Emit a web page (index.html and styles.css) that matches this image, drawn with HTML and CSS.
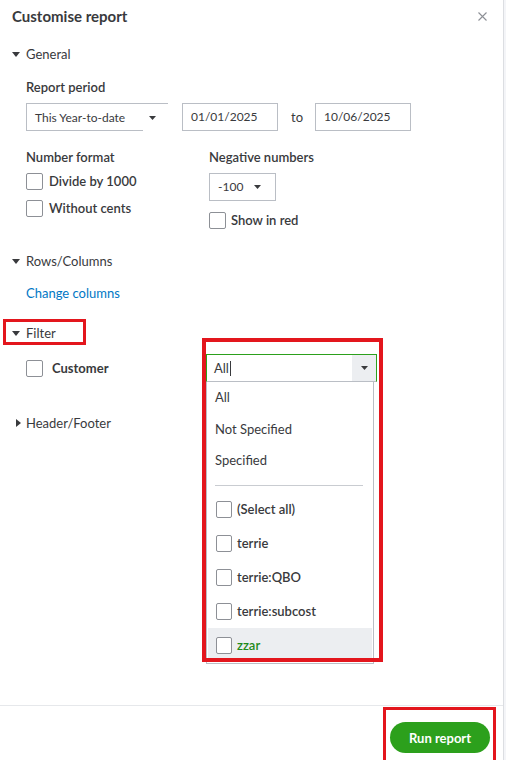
FILE: index.html
```html
<!DOCTYPE html>
<html lang="en">
<head>
<meta charset="utf-8">
<title>Customise report</title>
<link rel="stylesheet" href="styles.css">
</head>
<body>
<div class="page">
  <div class="panel">
    <div class="head">
      <h1 class="title">Customise report</h1>
      <span class="close" aria-label="Close">
        <svg width="9" height="9" viewBox="0 0 9 9"><path d="M0.5 0.5L8.5 8.5M8.5 0.5L0.5 8.5" stroke="#8d9096" stroke-width="1.1" fill="none"/></svg>
      </span>
    </div>

    <div class="body">
      <div class="toggle t-general">
        <svg class="tri" width="8" height="5" viewBox="0 0 8 5"><path d="M0 0H8L4 5Z" fill="#393a3d"/></svg>
        <span>General</span>
      </div>

      <div class="indent">
        <div class="label l-period">Report period</div>
        <div class="period-row">
          <div class="select period-select">
            <span>This Year-to-date</span>
            <svg class="arrow" width="7" height="4" viewBox="0 0 7 4"><path d="M0 0H7L3.5 4Z" fill="#393a3d"/></svg>
          </div>
          <div class="date">01/01/2025</div>
          <span class="to">to</span>
          <div class="date">10/06/2025</div>
        </div>

        <div class="format-grid">
          <div class="col">
            <div class="label">Number format</div>
            <div class="check-row cr-first"><span class="box"></span><span class="ctext">Divide by 1000</span></div>
            <div class="check-row cr-second"><span class="box"></span><span class="ctext">Without cents</span></div>
          </div>
          <div class="col">
            <div class="label">Negative numbers</div>
            <div class="select neg-select">
              <span>-100</span>
              <svg class="arrow" width="7" height="4" viewBox="0 0 7 4"><path d="M0 0H7L3.5 4Z" fill="#393a3d"/></svg>
            </div>
            <div class="check-row cr-red"><span class="box"></span><span class="ctext">Show in red</span></div>
          </div>
        </div>
      </div>

      <div class="toggle t-rows">
        <svg class="tri" width="8" height="5" viewBox="0 0 8 5"><path d="M0 0H8L4 5Z" fill="#393a3d"/></svg>
        <span>Rows/Columns</span>
      </div>
      <div class="indent">
        <a class="link" href="#">Change columns</a>
      </div>

      <div class="toggle t-filter">
        <svg class="tri" width="8" height="5" viewBox="0 0 8 5"><path d="M0 0H8L4 5Z" fill="#393a3d"/></svg>
        <span>Filter</span>
        <span class="mark mark-filter"></span>
      </div>

      <div class="indent filter-row">
        <div class="check-row cust"><span class="box"></span><span class="ctext strong">Customer</span></div>
        <div class="combo">
          <div class="combo-input">
            <span class="combo-text">All<span class="cursor"></span></span>
            <span class="combo-btn">
              <svg width="7" height="4" viewBox="0 0 7 4"><path d="M0 0H7L3.5 4Z" fill="#393a3d"/></svg>
            </span>
          </div>
          <div class="combo-list">
            <div class="opt">All</div>
            <div class="opt">Not Specified</div>
            <div class="opt">Specified</div>
            <div class="sep"></div>
            <div class="copt"><span class="box sm"></span><span class="otext">(Select all)</span></div>
            <div class="copt"><span class="box sm"></span><span class="otext">terrie</span></div>
            <div class="copt"><span class="box sm"></span><span class="otext">terrie:QBO</span></div>
            <div class="copt"><span class="box sm"></span><span class="otext">terrie:subcost</span></div>
            <div class="copt hover"><span class="box sm"></span><span class="otext">zzar</span></div>
          </div>
          <span class="mark mark-combo"></span>
        </div>
      </div>

      <div class="toggle t-header">
        <svg class="tri-right" width="5" height="8" viewBox="0 0 5 8"><path d="M0 0V8L5 4Z" fill="#393a3d"/></svg>
        <span>Header/Footer</span>
      </div>
    </div>

    <div class="foot">
      <span class="run-wrap">
        <button class="run" type="button">Run report</button>
        <span class="mark mark-run"></span>
      </span>
    </div>
  </div>
</div>
</body>
</html>
```

FILE: styles.css
```css
html, body {
  margin: 0;
  padding: 0;
  height: 100%;
  overflow: hidden;
}

body {
  background: #f4f5f8;
  font-family: Lato, "Open Sans", "Liberation Sans", sans-serif;
  font-size: 13px;
  line-height: 20px;
  color: #393a3d;
}

.page {
  height: 760px;
  display: flex;
}

.panel {
  width: 503px;
  height: 760px;
  background: #ffffff;
  border-right: 1px solid #dcdee2;
  display: flex;
  flex-direction: column;
  overflow: hidden;
}

.head {
  height: 32px;
  display: flex;
  align-items: center;
  justify-content: space-between;
  padding: 0 16px 0 12px;
}

.title {
  margin: 0;
  font-size: 15px;
  font-weight: 700;
  line-height: 20px;
  color: #393a3d;
}

.close {
  display: flex;
  width: 9px;
  height: 9px;
}

.body {
  flex: 1;
  padding-left: 12px;
}

.toggle {
  display: flex;
  align-items: center;
  height: 20px;
  position: relative;
  color: #393a3d;
}

.tri {
  margin-right: 6px;
}

.tri-right {
  margin-left: 4px;
  margin-right: 5px;
}

.t-general { margin-top: 12px; }
.t-rows { margin-top: 22px; }
.t-filter { margin-top: 20px; width: 80px; }
.t-header { margin-top: 31px; }

.indent {
  padding-left: 14px;
}

.label {
  font-weight: 600;
  height: 20px;
}

.l-period {
  margin-top: 13px;
}

.period-row {
  display: flex;
  align-items: center;
  margin-top: 6px;
}

.select {
  height: 28px;
  box-sizing: border-box;
  display: flex;
  align-items: center;
  justify-content: space-between;
  font-size: 12px;
  color: #393a3d;
}

.period-select {
  width: 142px;
  padding: 0 12px 0 8px;
  border-top: 1px solid #babec5;
  border-left: 1px solid #babec5;
  background: linear-gradient(#babec5, #babec5) no-repeat left bottom / 116px 1px;
}

.neg-select {
  width: 67px;
  margin-top: 6px;
  padding: 0 14px 0 8px;
  border: 1px solid #babec5;
}

.date {
  width: 96px;
  height: 28px;
  box-sizing: border-box;
  border: 1px solid #babec5;
  padding: 0 8px;
  font-size: 12px;
  line-height: 26px;
}

.period-row .period-select + .date {
  margin-left: 14px;
}

.to {
  margin: 0 12px 0 13px;
}

.format-grid {
  display: grid;
  grid-template-columns: 183px auto;
  margin-top: 16px;
}

.check-row {
  display: flex;
  align-items: center;
  height: 18px;
}

.box {
  width: 17px;
  height: 17px;
  box-sizing: border-box;
  border: 1px solid #8d9096;
  border-radius: 2px;
  background: #ffffff;
  flex: none;
}

.ctext {
  margin-left: 6px;
  font-weight: 600;
}

.cr-first { margin-top: 5px; }
.cr-second { margin-top: 9px; }
.cr-red { margin-top: 10px; }
.cr-red .ctext { margin-left: 5px; }

.link {
  display: block;
  margin-top: 12px;
  color: #0077c5;
  text-decoration: none;
  height: 20px;
}

.filter-row {
  display: flex;
  align-items: center;
  margin-top: 11px;
}

.cust {
  width: 180px;
}

.cust .ctext {
  margin-left: 9px;
}

.strong {
  font-weight: 700;
}

.combo {
  position: relative;
  width: 171px;
}

.combo-input {
  height: 28px;
  box-sizing: border-box;
  border: 1px solid #2ca01c;
  border-bottom-color: #babec5;
  display: flex;
  align-items: center;
  justify-content: space-between;
  background: #ffffff;
}

.combo-text {
  padding-left: 7px;
  display: flex;
  align-items: center;
}

.cursor {
  display: inline-block;
  width: 1px;
  height: 15px;
  background: #393a3d;
  margin-left: 1px;
}

.combo-btn {
  width: 24px;
  height: 26px;
  background: #eceef1;
  display: flex;
  align-items: center;
  justify-content: center;
}

.combo-list {
  position: absolute;
  top: 28px;
  left: 0;
  width: 168px;
  height: 282px;
  box-sizing: border-box;
  border: 1px solid #babec5;
  border-top: none;
  padding: 0 1px;
  background: #ffffff;
  z-index: 2;
}

.opt {
  height: 31.5px;
  line-height: 31.5px;
  padding-left: 7px;
}

.sep {
  height: 1px;
  background: #c9ccd1;
  margin: 8.5px 9px 6px 7px;
}

.copt {
  height: 34px;
  display: flex;
  align-items: center;
  padding-left: 8px;
}

.box.sm {
  width: 16px;
}

.otext {
  margin-left: 5px;
  font-weight: 600;
}

.copt.hover {
  background: #eceef1;
}

.copt.hover .otext {
  color: #1f8a1a;
}

.foot {
  height: 55px;
  box-sizing: border-box;
  border-top: 1px solid #e6e8eb;
  padding: 16px 13px 0 0;
  display: flex;
  justify-content: flex-end;
  align-items: flex-start;
}

.run-wrap {
  position: relative;
  display: inline-block;
}

.run {
  width: 100px;
  height: 31px;
  border: none;
  border-radius: 16px;
  background: #2ca01c;
  color: #ffffff;
  font-family: Lato, "Open Sans", "Liberation Sans", sans-serif;
  font-size: 13px;
  font-weight: 700;
  padding: 0;
  display: block;
}

.mark {
  position: absolute;
  box-sizing: border-box;
  border: 3px solid #e3161d;
  pointer-events: none;
}

.mark-filter {
  left: -9px;
  top: -4px;
  width: 83px;
  height: 26px;
}

.mark-combo {
  left: -4px;
  top: -16px;
  width: 181px;
  height: 324px;
  border-width: 4px;
  z-index: 3;
}

.mark-run {
  left: -7px;
  top: -15px;
  width: 113px;
  height: 60px;
}
```
